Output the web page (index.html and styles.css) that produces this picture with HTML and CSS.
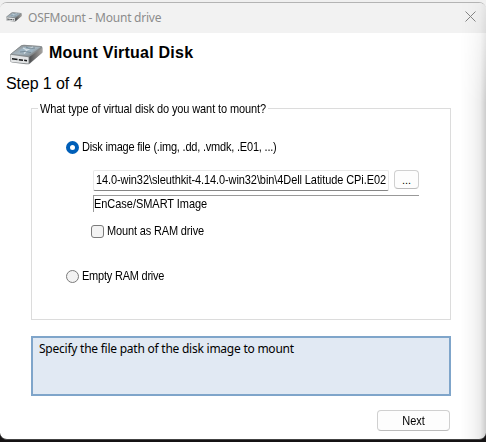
FILE: index.html
```html
<!DOCTYPE html>
<html lang="en">
<head>
<meta charset="utf-8">
<title>OSFMount - Mount drive</title>
<link rel="stylesheet" href="styles.css">
</head>
<body>
<svg width="0" height="0" class="defs" aria-hidden="true">
  <defs>
    <linearGradient id="top" x1="0" y1="0" x2="1" y2="1"><stop offset="0" stop-color="#85888a"/><stop offset=".5" stop-color="#a9b8c1"/><stop offset="1" stop-color="#6c7a82"/></linearGradient>
    <linearGradient id="side" x1="0" y1="0" x2="1" y2="0"><stop offset="0" stop-color="#4b4d4f"/><stop offset="1" stop-color="#a5a29f"/></linearGradient>
    <symbol id="drive" viewBox="0 0 33 21">
      <path d="M0 10.500 11 1.500Q12 .7 14 .7L31 2Q32.500 2.300 32.500 4V8.500L20 19.500Q18.500 20.700 16 20.200L2 18.500Q0 18 0 16Z" fill="#85898b"/>
      <path d="M1 10 12 1.500 31.500 2.800 18.500 12.300Z" fill="url(#top)" stroke="#85898b" stroke-width=".5"/>
      <path d="M8 7.500 14 3 25 3.500 22 8 14 9.500Z" fill="#9eb4c2"/>
      <path d="M13 4 17 6 23 3M17 6 14 9.500" fill="none" stroke="#d5e0e6" stroke-width="1.200"/>
      <path d="M16 3 19 4.500 25 4M10 8 15 7.500 21 8.500" fill="none" stroke="#647783" stroke-width=".7"/>
      <path d="M.5 10.800 18.500 13.200V19.600L2 18Q.5 17.800.5 16Z" fill="#e3e5e6"/>
      <path d="M2 14.800 7.500 15.500M8.800 15.700 13 16.200M14.200 16.300 17 16.700" stroke="#17191b" stroke-width="1.600"/>
      <path d="M19.300 13 32 4V8.800L19.300 19.600Z" fill="url(#side)"/>
    </symbol>
  </defs>
</svg>
<main class="window">
  <header class="titlebar">
    <svg class="title-icon"><use href="#drive"/></svg>
    <span class="title-text">OSFMount - Mount drive</span>
    <svg class="close" viewBox="0 0 11 11"><path d="M.5.5 10.500 10.500M10.500.5.5 10.500"/></svg>
  </header>
  <section class="content">
    <div class="heading">
      <svg class="drive-icon"><use href="#drive"/></svg>
      <h1>Mount Virtual Disk</h1>
    </div>
    <p class="step">Step 1 of 4</p>
    <div class="group">
      <div class="legend"><span class="tall question">What type of virtual disk do you want to mount?</span></div>
      <div class="option"><i class="radio checked"></i><span class="tall t-image">Disk image file (.img, .dd, .vmdk, .E01, ...)</span></div>
      <div class="path-row">
        <div class="path"><span class="tall t-path">14.0-win32\sleuthkit-4.14.0-win32\bin\4Dell Latitude CPi.E02</span></div>
        <button class="browse">...</button>
      </div>
      <div class="format"><span class="tall t-format">EnCase/SMART Image</span></div>
      <div class="option ram"><i class="check"></i><span class="tall t-ram">Mount as RAM drive</span></div>
      <div class="option empty"><i class="radio"></i><span class="tall t-empty">Empty RAM drive</span></div>
    </div>
    <div class="info"><span class="t-info">Specify the file path of the disk image to mount</span></div>
    <button class="next"><span class="tall">Next</span></button>
  </section>
</main>
</body>
</html>
```
FILE: styles.css
```css
* { box-sizing: border-box; }
html { background: #151314; }
body {
  margin: 0;
  width: 486px;
  height: 442px;
  overflow: hidden;
  background: linear-gradient(#f0f0f0 0 30px, #151314 30px);
  padding-top: 2px;
  font: 11px/14px "Liberation Sans", Arial, sans-serif;
  color: #000;
}
.defs { position: absolute; }
.window {
  position: relative;
  height: 438px;
  overflow: hidden;
  border-top: 1px solid #b4b4b4;
  border-bottom: 1px solid #444;
  border-radius: 7px;
  background: #fff;
}
.window::after {
  content: "";
  position: absolute;
  inset: 0 0 0 auto;
  width: 26px;
  background: linear-gradient(90deg, rgba(0,0,0,0), rgba(0,0,0,.035) 50%, rgba(0,0,0,.08) 78%, rgba(0,0,0,.2));
  -webkit-mask-image: linear-gradient(rgba(0,0,0,.25), #000 100px);
  mask-image: linear-gradient(rgba(0,0,0,.25), #000 100px);
}
.titlebar {
  display: flex;
  align-items: center;
  height: 30px;
  padding: 0 10px 0 6px;
  background: #f2f2f2;
}
.title-icon { width: 16px; height: 10px; margin: 0 6px 2px 0; }
.title-text { font: 12px/16px "Noto Sans", sans-serif; color: #8c8c8c; letter-spacing: -.23px; }
.close { width: 11px; height: 11px; margin: 0 0 3px auto; fill: none; stroke: #858585; stroke-width: 1; }
.content { display: flex; flex-direction: column; }
.heading { display: flex; align-items: center; height: 35px; padding: 6px 0 0 10px; }
.drive-icon { width: 33px; height: 21px; margin-top: 1px; }
h1 { margin: 0 0 2px 6px; font-size: 16px; line-height: 20px; letter-spacing: .23px; }
.step { margin: 6px 0 0 6px; font-size: 16px; line-height: 20px; letter-spacing: -.1px; }
.group {
  width: 420px;
  height: 212px;
  margin: 14px 0 0 31px;
  border: 1px solid #dcdcdc;
}
span { white-space: nowrap; }
.tall { display: inline-block; transform: scaleY(1.1); transform-origin: 0 11px; }
.legend { height: 14px; margin: -7px 0 0 6px; }
.question { background: #fff; padding: 0 2px; letter-spacing: -.11px; }
.t-image { letter-spacing: -.2px; }
.t-path { letter-spacing: -.09px; }
.t-format { letter-spacing: -.04px; }
.t-ram { letter-spacing: -.15px; }
.t-empty { letter-spacing: -.22px; }
.option { display: flex; align-items: center; height: 14px; margin: 24px 0 0 34px; }
.radio { width: 13px; height: 13px; margin-right: 3px; border: 1px solid #7b7b7b; border-radius: 50%; background: #f3f3f3; }
.radio.checked { border: 4px solid #005fb8; background: #fff; }
.path-row { display: flex; gap: 5px; margin: 16px 0 0 61px; }
.path { width: 296px; height: 21px; padding: 2px 0 0 2px; border: 1px solid #e8e8e8; border-bottom-color: #858585; border-radius: 2px; }
button { font: inherit; padding: 0; color: #000; background: #fdfdfd; border: 1px solid #d0d0d0; border-bottom-color: #bcbcbc; border-radius: 4px; }
.browse { width: 25px; height: 19px; padding-top: 2px; line-height: 15px; }
.format { width: 326px; height: 17px; margin: 4px 0 0 61px; padding: 0; border-top: 1px solid #999; border-left: 1px solid #999; line-height: 16px; }
.ram { margin: 12px 0 0 59px; }
.check { width: 13px; height: 13px; margin-right: 3px; border: 1px solid #7b7b7b; border-radius: 3px; background: #f3f3f3; }
.empty { margin-top: 31px; }
.info { width: 420px; height: 60px; margin: 16px 0 0 31px; padding: 3px 0 0 6px; border: 2px solid #7fa5ca; background: #e1e9f3; }
.t-info { font: 12px/16px "Noto Sans", sans-serif; letter-spacing: -.24px; }
.next { width: 73px; height: 21px; margin: 14px 0 0 377px; }
```
